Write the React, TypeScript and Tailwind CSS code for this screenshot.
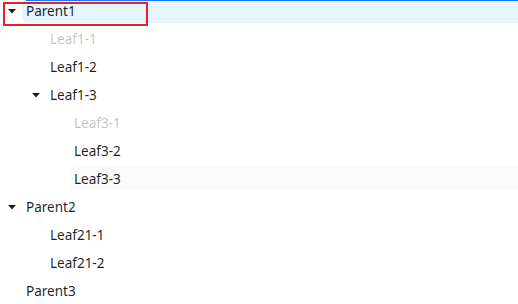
interface TreeNode {
  key: string;
  title: string;
  depth: number;
  expandable?: boolean;
  disabled?: boolean;
  selected?: boolean;
  hovered?: boolean;
}

const nodes: TreeNode[] = [
  { key: "p1", title: "Parent1", depth: 0, expandable: true, selected: true },
  { key: "l11", title: "Leaf1-1", depth: 1, disabled: true },
  { key: "l12", title: "Leaf1-2", depth: 1 },
  { key: "l13", title: "Leaf1-3", depth: 1, expandable: true },
  { key: "l31", title: "Leaf3-1", depth: 2, disabled: true },
  { key: "l32", title: "Leaf3-2", depth: 2 },
  { key: "l33", title: "Leaf3-3", depth: 2, hovered: true },
  { key: "p2", title: "Parent2", depth: 0, expandable: true },
  { key: "l211", title: "Leaf21-1", depth: 1 },
  { key: "l212", title: "Leaf21-2", depth: 1 },
  { key: "p3", title: "Parent3", depth: 0 },
];

function Caret() {
  return (
    <svg width="8" height="5" viewBox="0 0 8 5" className="block">
      <path d="M0 0H8L4 4.5Z" fill="#1f1f1f" />
    </svg>
  );
}

function Indent({ depth }: { depth: number }) {
  if (depth === 0) return null;
  if (depth === 1) return <span className="w-6 shrink-0" />;
  return <span className="w-12 shrink-0" />;
}

export default function App() {
  return (
    <div
      className="relative h-[304px] w-[518px] overflow-hidden bg-white text-[13.5px]"
      style={{ fontFamily: '"Segoe UI", "Noto Sans", sans-serif' }}
    >
      <div className="-mt-px flex flex-col">
        {nodes.map((n) => (
          <div key={n.key} className="mb-1 flex h-6 items-center">
            <Indent depth={n.depth} />
            <span className="flex h-6 w-[22px] shrink-0 items-center justify-center pl-[2px]">
              {n.expandable && <Caret />}
            </span>
            <div
              className={
                "flex h-6 flex-1 items-center px-1 leading-6 " +
                (n.selected
                  ? "rounded-l-[6px] bg-[#e6f4ff] "
                  : n.hovered
                  ? "rounded-l-[6px] bg-[#fafafa] "
                  : "") +
                (n.disabled ? "text-black/25" : "text-black/[0.88]")
              }
            >
              {n.title}
            </div>
          </div>
        ))}
      </div>

      {/* drop indicator */}
      <div className="absolute left-[26px] right-0 top-0 h-px bg-[#1677ff]" />

      {/* focus box */}
      <div className="absolute left-[3px] top-[2px] h-[24px] w-[145px] border-2 border-[#e8202a]" />

      {/* watermark */}
      <span className="pointer-events-none absolute left-[200px] top-[60px] -rotate-[22deg] text-[34px] text-black/[0.025]">
        liqing
      </span>
      <span className="pointer-events-none absolute left-[405px] top-[-4px] -rotate-[22deg] text-[34px] text-black/[0.025]">
        0261
      </span>
      <span className="pointer-events-none absolute left-[452px] top-[130px] -rotate-[22deg] text-[34px] text-black/[0.025]">
        826
      </span>
    </div>
  );
}
